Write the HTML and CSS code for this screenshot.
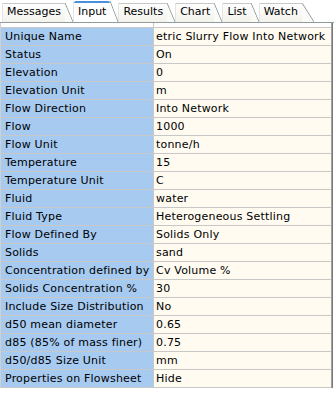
FILE: index.html
```html
<!DOCTYPE html>
<html lang="en">

<head>
    <meta charset="UTF-8">
    <title>Input</title>
    <link rel="stylesheet" href="styles.css">
</head>

<body>
    <div class="tabs">
        <span class="tab">Messages</span>
        <span class="tab active">Input</span>
        <span class="tab">Results</span>
        <span class="tab">Chart</span>
        <span class="tab">List</span>
        <span class="tab last">Watch</span>
    </div>

    <div class="sheet">
        <div class="row head"><span class="name"></span><span class="value"></span></div>
        <div class="row"><span class="name">Unique Name</span><span class="value">etric Slurry Flow Into Network</span></div>
        <div class="row"><span class="name">Status</span><span class="value">On</span></div>
        <div class="row"><span class="name">Elevation</span><span class="value">0</span></div>
        <div class="row"><span class="name">Elevation Unit</span><span class="value">m</span></div>
        <div class="row"><span class="name">Flow Direction</span><span class="value">Into Network</span></div>
        <div class="row"><span class="name">Flow</span><span class="value">1000</span></div>
        <div class="row"><span class="name">Flow Unit</span><span class="value">tonne/h</span></div>
        <div class="row"><span class="name">Temperature</span><span class="value">15</span></div>
        <div class="row"><span class="name">Temperature Unit</span><span class="value">C</span></div>
        <div class="row"><span class="name">Fluid</span><span class="value">water</span></div>
        <div class="row"><span class="name">Fluid Type</span><span class="value">Heterogeneous Settling</span></div>
        <div class="row"><span class="name">Flow Defined By</span><span class="value">Solids Only</span></div>
        <div class="row"><span class="name">Solids</span><span class="value">sand</span></div>
        <div class="row"><span class="name">Concentration defined by</span><span class="value">Cv Volume %</span></div>
        <div class="row"><span class="name">Solids Concentration %</span><span class="value">30</span></div>
        <div class="row"><span class="name">Include Size Distribution</span><span class="value">No</span></div>
        <div class="row"><span class="name">d50 mean diameter</span><span class="value">0.65</span></div>
        <div class="row"><span class="name">d85 (85% of mass finer)</span><span class="value">0.75</span></div>
        <div class="row"><span class="name">d50/d85 Size Unit</span><span class="value">mm</span></div>
        <div class="row"><span class="name">Properties on Flowsheet</span><span class="value">Hide</span></div>
    </div>
</body>

</html>
```

FILE: styles.css
```css
/* Reset */
body {
    margin: 0;
    background-color: #fff;
    color: #000;
    font-family: "DejaVu Sans", Verdana, sans-serif;
    font-size: 11px;
    letter-spacing: 0.2px;
}

/* Tab strip */
.tabs {
    display: flex;
    align-items: flex-end;
    height: 22px;
    padding-left: 2px;
    border-bottom: 1px solid #919b9c;
    letter-spacing: 0;
}

.tab {
    position: relative;
    height: 19px;
    line-height: 18px;
    padding: 0 12px 0 4px;
    border-left: 1px solid #e4e4e4;
    background: linear-gradient(#ffffff, #f3f2ec);
    background-size: calc(100% - 8px) 100%;
    background-repeat: no-repeat;
}

/* top edge and slanted right edge */
.tab::before {
    content: "";
    position: absolute;
    top: 0;
    left: 0;
    right: 8px;
    border-top: 1px solid #c8c8c8;
}

.tab::after {
    content: "";
    position: absolute;
    top: 0;
    right: 0;
    width: 8px;
    height: 19px;
    background: linear-gradient(to top right, #fafaf7 calc(50% - 0.7px), #8f9a9b 50%, transparent calc(50% + 0.9px));
}

.tab.last {
    padding-right: 16px;
}

.tab.last::before {
    right: 12px;
}

.tab.last::after {
    width: 12px;
}

.tab.active {
    height: 21px;
    line-height: 22px;
    background: #fff;
    background-size: calc(100% - 8px) 100%;
    background-repeat: no-repeat;
}

.tab.active::before {
    border-top: 2px solid #4a8ee0;
    border-radius: 3px 3px 0 0;
}

.tab.active::after {
    height: 21px;
    background: linear-gradient(to top right, #ffffff calc(50% - 0.7px), #8f9a9b 50%, transparent calc(50% + 0.9px));
}

/* Property grid */
.sheet {
    width: 330px;
    border-left: 1px solid #d0d0d0;
    border-right: 1px solid #a0a0a0;
    box-shadow: 1px 0 0 #7a7a7a;
}

.row {
    display: grid;
    grid-template-columns: 153px 1fr;
    height: 17px;
    line-height: 17px;
    border-bottom: 1px solid #c8c8c8;
}

.row.head {
    height: 4px;
    background-color: #fff;
}

.name {
    padding-left: 4px;
    background-color: #a6caf0;
    border-right: 1px solid #c8c8c8;
    white-space: nowrap;
    overflow: hidden;
}

.value {
    padding-left: 2px;
    background-color: #fffbf0;
    white-space: nowrap;
    overflow: hidden;
}

.head .name,
.head .value {
    background-color: #fff;
}
```
